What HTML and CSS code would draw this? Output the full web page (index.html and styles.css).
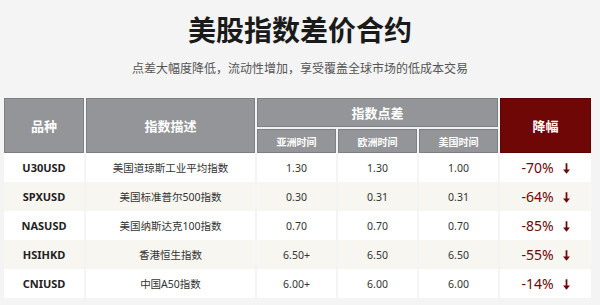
FILE: index.html
```html
<!DOCTYPE html>
<html lang="zh">
<head>
<meta charset="utf-8">
<title>美股指数差价合约</title>
<link rel="stylesheet" href="styles.css">
</head>
<body>
<h1 class="title">美股指数差价合约</h1>
<p class="subtitle">点差大幅度降低，流动性增加，享受覆盖全球市场的低成本交易</p>
<table class="spreads">
  <colgroup>
    <col class="c-code"><col class="c-desc"><col class="c-num"><col class="c-num"><col class="c-num"><col class="c-drop">
  </colgroup>
  <thead>
    <tr class="h-top">
      <th rowspan="2" class="hd">品种</th>
      <th rowspan="2" class="hd">指数描述</th>
      <th colspan="3" class="hd group">指数点差</th>
      <th rowspan="2" class="hd red">降幅</th>
    </tr>
    <tr class="h-sub">
      <th class="hd sub">亚洲时间</th>
      <th class="hd sub">欧洲时间</th>
      <th class="hd sub">美国时间</th>
    </tr>
  </thead>
  <tbody>
    <tr><td class="code">U30USD</td><td>美国道琼斯工业平均指数</td><td>1.30</td><td>1.30</td><td>1.00</td><td class="drop">-70%<svg class="arrow" viewBox="0 0 8 12"><path d="M3 0h2v7h3l-4 5-4-5h3z"/></svg></td></tr>
    <tr class="alt"><td class="code">SPXUSD</td><td>美国标准普尔500指数</td><td>0.30</td><td>0.31</td><td>0.31</td><td class="drop">-64%<svg class="arrow" viewBox="0 0 8 12"><path d="M3 0h2v7h3l-4 5-4-5h3z"/></svg></td></tr>
    <tr><td class="code">NASUSD</td><td>美国纳斯达克100指数</td><td>0.70</td><td>0.70</td><td>0.70</td><td class="drop">-85%<svg class="arrow" viewBox="0 0 8 12"><path d="M3 0h2v7h3l-4 5-4-5h3z"/></svg></td></tr>
    <tr class="alt"><td class="code">HSIHKD</td><td>香港恒生指数</td><td>6.50+</td><td>6.50</td><td>6.50</td><td class="drop">-55%<svg class="arrow" viewBox="0 0 8 12"><path d="M3 0h2v7h3l-4 5-4-5h3z"/></svg></td></tr>
    <tr><td class="code">CNIUSD</td><td>中国A50指数</td><td>6.00+</td><td>6.00</td><td>6.00</td><td class="drop">-14%<svg class="arrow" viewBox="0 0 8 12"><path d="M3 0h2v7h3l-4 5-4-5h3z"/></svg></td></tr>
  </tbody>
</table>
</body>
</html>
```

FILE: styles.css
```css
html, body {
  margin: 0;
  padding: 0;
  background: #f4f4f4;
  font-family: "Noto Sans", "Noto Sans CJK SC", sans-serif;
  color: #333;
}
.title {
  margin: 11px 0 0;
  text-align: center;
  font-size: 28px;
  line-height: 36px;
  font-weight: 700;
  color: #1a1a1a;
  font-family: "Noto Sans CJK SC", sans-serif;
}
.subtitle {
  margin: 11px 0 0;
  text-align: center;
  font-size: 12px;
  line-height: 20px;
  color: #555;
  font-family: "Noto Sans CJK SC", sans-serif;
}
.spreads {
  margin: 20px 0 0 2px;
  border-collapse: separate;
  border-spacing: 2px 0;
  table-layout: fixed;
  width: 591px;
}
.c-code { width: 80px; }
.c-desc { width: 169px; }
.c-num { width: 79px; }
.c-drop { width: 91px; }
.hd {
  background: #939598;
  color: #fff;
  font-weight: 700;
  font-size: 13px;
  box-shadow: inset 0 0 0 1px #7d7f82;
  padding: 0;
  text-align: center;
  vertical-align: middle;
}
.h-top { height: 31px; }
.h-sub { height: 24px; }
.group {
  border-bottom: 2px solid #f0f0f0;
  background-clip: padding-box;
}
.sub { font-size: 10px; }
.red {
  background: #700707;
  box-shadow: inset 0 0 0 1px #5c0303;
}
tbody tr { height: 29px; }
tbody td {
  background: #fff;
  text-align: center;
  font-size: 10.5px;
  color: #333;
  padding: 0;
  vertical-align: middle;
}
tbody tr.alt td { background: #f8f6f1; }
td.code {
  font-weight: 700;
  color: #222;
  font-size: 11px;
}
td.drop {
  color: #6e0808;
  font-size: 14px;
}
.arrow {
  width: 7px;
  height: 11px;
  margin-left: 9px;
  fill: #6e0808;
  vertical-align: -1px;
}
```
